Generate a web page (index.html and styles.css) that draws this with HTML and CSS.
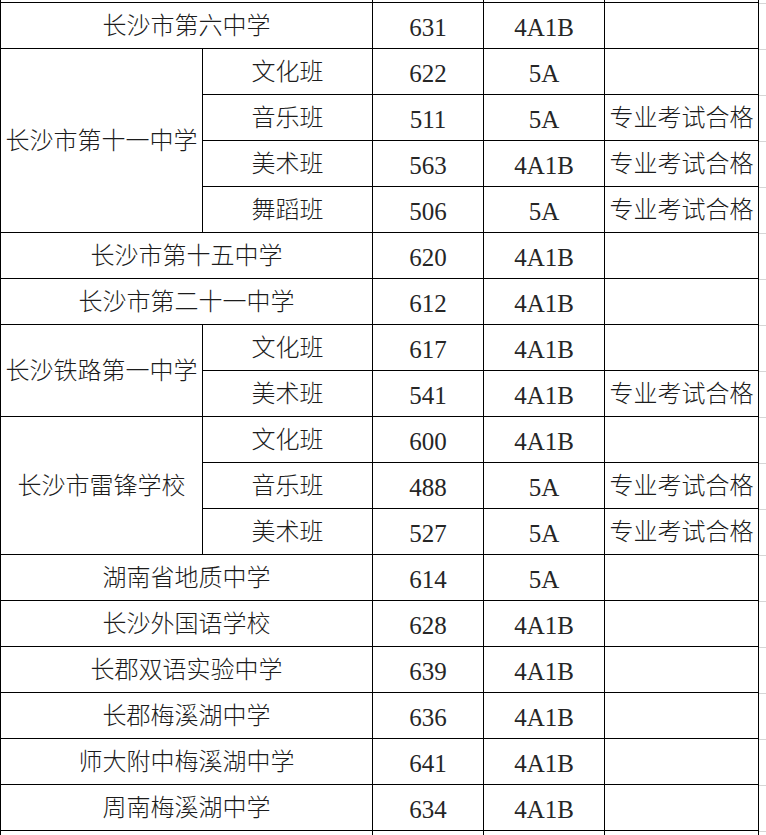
FILE: index.html
```html
<!DOCTYPE html>
<html lang="zh-CN">
<head>
<meta charset="utf-8">
<title>录取分数线</title>
<link rel="stylesheet" href="styles.css">
</head>
<body>
<div class="sheet">
<table class="grid">
  <colgroup>
    <col class="c-school"><col class="c-class"><col class="c-score"><col class="c-grade"><col class="c-note">
  </colgroup>
  <tbody>
    <tr class="stub"><td colspan="2"></td><td></td><td></td><td></td></tr>
    <tr><td colspan="2">长沙市第六中学</td><td class="num">631</td><td class="num">4A1B</td><td></td></tr>
    <tr><td rowspan="4">长沙市第十一中学</td><td>文化班</td><td class="num">622</td><td class="num">5A</td><td></td></tr>
    <tr><td>音乐班</td><td class="num">511</td><td class="num">5A</td><td>专业考试合格</td></tr>
    <tr><td>美术班</td><td class="num">563</td><td class="num">4A1B</td><td>专业考试合格</td></tr>
    <tr><td>舞蹈班</td><td class="num">506</td><td class="num">5A</td><td>专业考试合格</td></tr>
    <tr><td colspan="2">长沙市第十五中学</td><td class="num">620</td><td class="num">4A1B</td><td></td></tr>
    <tr><td colspan="2">长沙市第二十一中学</td><td class="num">612</td><td class="num">4A1B</td><td></td></tr>
    <tr><td rowspan="2">长沙铁路第一中学</td><td>文化班</td><td class="num">617</td><td class="num">4A1B</td><td></td></tr>
    <tr><td>美术班</td><td class="num">541</td><td class="num">4A1B</td><td>专业考试合格</td></tr>
    <tr><td rowspan="3">长沙市雷锋学校</td><td>文化班</td><td class="num">600</td><td class="num">4A1B</td><td></td></tr>
    <tr><td>音乐班</td><td class="num">488</td><td class="num">5A</td><td>专业考试合格</td></tr>
    <tr><td>美术班</td><td class="num">527</td><td class="num">5A</td><td>专业考试合格</td></tr>
    <tr><td colspan="2">湖南省地质中学</td><td class="num">614</td><td class="num">5A</td><td></td></tr>
    <tr><td colspan="2">长沙外国语学校</td><td class="num">628</td><td class="num">4A1B</td><td></td></tr>
    <tr><td colspan="2">长郡双语实验中学</td><td class="num">639</td><td class="num">4A1B</td><td></td></tr>
    <tr><td colspan="2">长郡梅溪湖中学</td><td class="num">636</td><td class="num">4A1B</td><td></td></tr>
    <tr><td colspan="2">师大附中梅溪湖中学</td><td class="num">641</td><td class="num">4A1B</td><td></td></tr>
    <tr><td colspan="2">周南梅溪湖中学</td><td class="num">634</td><td class="num">4A1B</td><td></td></tr>
    <tr class="tail"><td colspan="2"></td><td></td><td></td><td></td></tr>
  </tbody>
</table>
</div>
</body>
</html>
```
FILE: styles.css
```css
html, body {
  margin: 0;
  padding: 0;
  background: #ffffff;
  overflow: hidden;
}

body {
  width: 766px;
  height: 835px;
}

.sheet {
  width: 766px;
  height: 835px;
  background-image: repeating-linear-gradient(to bottom, #d6d6d6 0, #d6d6d6 1px, transparent 1px, transparent 46px);
  background-position: 0 3px;
  border-left: 1px solid #a8a8a8;
  box-sizing: border-box;
}

.grid {
  border-collapse: collapse;
  table-layout: fixed;
  width: 758px;
  margin-left: -1px;
  background: #ffffff;
  font-family: "Liberation Serif", "Noto Sans CJK SC", serif;
  font-size: 24px;
  color: #1c1c1c;
}

.c-school { width: 202px; }
.c-class { width: 170px; }
.c-score { width: 111px; }
.c-grade { width: 121px; }
.c-note { width: 154px; }

.grid td {
  border: 1px solid #000000;
  height: 45px;
  padding: 0;
  text-align: center;
  vertical-align: middle;
  white-space: nowrap;
  line-height: 28px;
  font-weight: 300;
}

.grid td.num {
  font-size: 25px;
  font-weight: 400;
  color: #262626;
  padding-top: 5px;
  box-sizing: border-box;
}

.grid tr.stub td {
  height: 2px;
  border-top: none;
}

.grid tr.tail td {
  height: 10px;
  border-bottom: none;
}
```
